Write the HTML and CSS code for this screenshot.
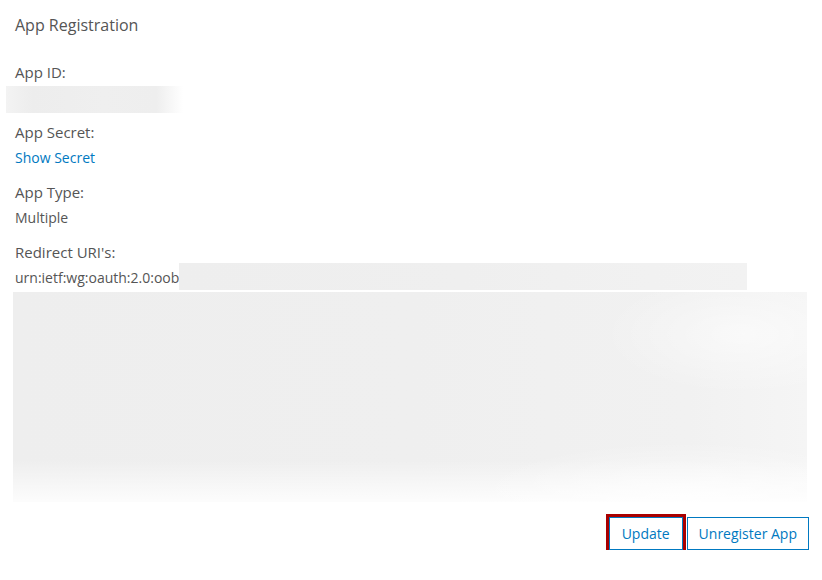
FILE: index.html
```html
<!DOCTYPE html>
<html lang="en">
<head>
<meta charset="utf-8">
<title>App Registration</title>
<link rel="stylesheet" href="styles.css">
</head>
<body>
<main class="panel">
  <h1 class="title">App Registration</h1>

  <section class="field">
    <div class="label">App ID:</div>
    <div class="value"><div class="mask mask-id"></div></div>
  </section>

  <section class="field">
    <div class="label">App Secret:</div>
    <div class="value"><a class="link" href="#">Show Secret</a></div>
  </section>

  <section class="field">
    <div class="label">App Type:</div>
    <div class="value">Multiple</div>
  </section>

  <section class="field">
    <div class="label">Redirect URI's:</div>
    <div class="value uri-row"><span>urn:ietf:wg:oauth:2.0:oob</span><div class="mask mask-uri"></div></div>
  </section>

  <div class="mask mask-block"></div>

  <div class="actions">
    <button class="btn btn-focus" type="button">Update</button>
    <button class="btn" type="button">Unregister App</button>
  </div>
</main>
</body>
</html>
```

FILE: styles.css
```css
html, body {
  margin: 0;
  padding: 0;
  background: #ffffff;
}

body {
  font-family: "Open Sans", Lato, "Liberation Sans", sans-serif;
  color: #555555;
}

.panel {
  display: flex;
  flex-direction: column;
  padding: 15px 15px 0 15px;
}

.title {
  margin: 0 0 27px 0;
  font-size: 16px;
  line-height: 20px;
  font-weight: 400;
  color: #555555;
}

.field {
  display: flex;
  flex-direction: column;
  margin-bottom: 12px;
}

.label {
  font-size: 15px;
  line-height: 20px;
  margin-bottom: 4px;
}

.value {
  font-size: 14px;
  line-height: 24px;
  height: 24px;
}

.link {
  color: #0079c1;
  text-decoration: none;
}

.uri-row {
  display: flex;
  align-items: center;
}

.mask {
  background: #eeeeee;
}

.mask-id {
  width: 177px;
  height: 27px;
  margin-left: -9px;
  background: linear-gradient(to right, #f3f3f3 0, #ededed 15%, #efefef 55%, #eeeeee 85%, rgba(255,255,255,0) 100%);
}

.mask-uri {
  width: 568px;
  height: 27px;
  margin-top: -3px;
  background: linear-gradient(to right, #eeeeee 0, #efefef 50%, #f2f2f2 100%);
}

.mask-block {
  width: 794px;
  height: 210px;
  margin: -10px 0 0 -2px;
  background:
    radial-gradient(ellipse 140px 60px at 92% 20%, rgba(255,255,255,0.55), rgba(255,255,255,0)),
    radial-gradient(ellipse 220px 60px at 85% 100%, rgba(255,255,255,0.8), rgba(255,255,255,0)),
    linear-gradient(to bottom, rgba(255,255,255,0) 0, rgba(255,255,255,0) 80%, rgba(255,255,255,0.85) 100%),
    linear-gradient(to right, #eeeeee 0, #efefef 50%, #f1f1f1 85%, #f5f5f5 100%);
}

.actions {
  display: flex;
  justify-content: flex-end;
  gap: 4px;
  margin: 15px -2px 0 0;
}

.btn {
  font-family: inherit;
  font-size: 14px;
  color: #0079c1;
  background: #ffffff;
  border: 1px solid #0079c1;
  height: 33px;
  padding: 0 11px;
  cursor: pointer;
}

.btn-focus {
  outline: 3px solid #a80000;
  outline-offset: 0;
  padding: 0 12px;
}
```
